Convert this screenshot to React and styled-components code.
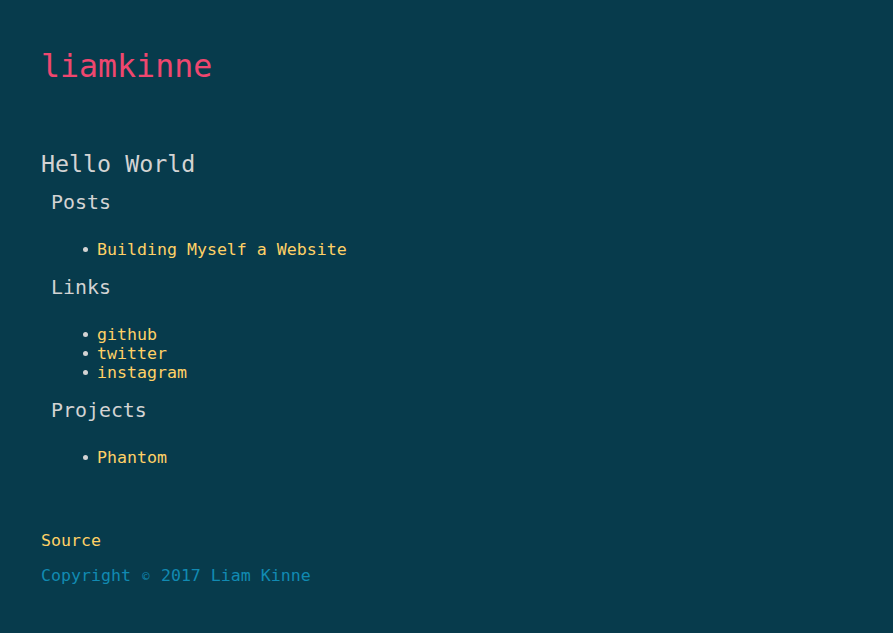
import React from 'react';
import styled, { createGlobalStyle } from 'styled-components';

const GlobalStyle = createGlobalStyle`
  html, body {
    margin: 0;
    padding: 0;
    background: #073b4c;
  }
  body {
    font-family: "DejaVu Sans Mono", "Liberation Mono", monospace;
    color: #d3d3d3;
  }
`;

const Page = styled.div`
  min-height: 633px;
  box-sizing: border-box;
  padding: 46px 41px 0;
  display: flex;
  flex-direction: column;
`;

const Brand = styled.h1`
  margin: 0;
  font-size: 31.6px;
  line-height: 40px;
  font-weight: 400;
  color: #ef476f;
`;

const Title = styled.h2`
  margin: 63px 0 0;
  font-size: 23.3px;
  line-height: 30px;
  font-weight: 400;
  color: #d3d3d3;
`;

const SectionHeading = styled.h3`
  margin: ${(p) => p.$top}px 0 0;
  padding-left: 10px;
  font-size: 19.9px;
  line-height: 26px;
  font-weight: 400;
  color: #d3d3d3;
`;

const List = styled.ul`
  margin: 23.5px 0 0;
  padding-left: 56px;
  font-size: 16.6px;
  line-height: 19px;
`;

const Item = styled.li`
  list-style: none;
  display: flex;
  align-items: center;

  &::before {
    content: '';
    width: 5px;
    height: 5px;
    margin: 1px 9px 0 -14px;
    border-radius: 50%;
    background: #d3d3d3;
    flex-shrink: 0;
  }
`;

const Link = styled.a`
  color: #ffd166;
  text-decoration: none;
`;

const Footer = styled.footer`
  margin-top: 64px;
  display: flex;
  flex-direction: column;
  gap: 16px;
  font-size: 16.6px;
  line-height: 19px;
`;

const Copyright = styled.p`
  margin: 0;
  color: #118ab2;

  small {
    display: inline-block;
    width: 10px;
    text-align: center;
    font-size: 12px;
  }
`;

const sections = [
  { title: 'Posts', top: 11, items: ['Building Myself a Website'] },
  { title: 'Links', top: 16.5, items: ['github', 'twitter', 'instagram'] },
  { title: 'Projects', top: 16.5, items: ['Phantom'] },
];

export default function App() {
  return (
    <>
      <GlobalStyle />
      <Page>
        <Brand>liamkinne</Brand>
        <Title>Hello World</Title>
        {sections.map((s) => (
          <React.Fragment key={s.title}>
            <SectionHeading $top={s.top}>{s.title}</SectionHeading>
            <List>
              {s.items.map((it) => (
                <Item key={it}>
                  <Link href="#">{it}</Link>
                </Item>
              ))}
            </List>
          </React.Fragment>
        ))}
        <Footer>
          <Link href="#">Source</Link>
          <Copyright>
            Copyright <small>©</small> 2017 Liam Kinne
          </Copyright>
        </Footer>
      </Page>
    </>
  );
}
